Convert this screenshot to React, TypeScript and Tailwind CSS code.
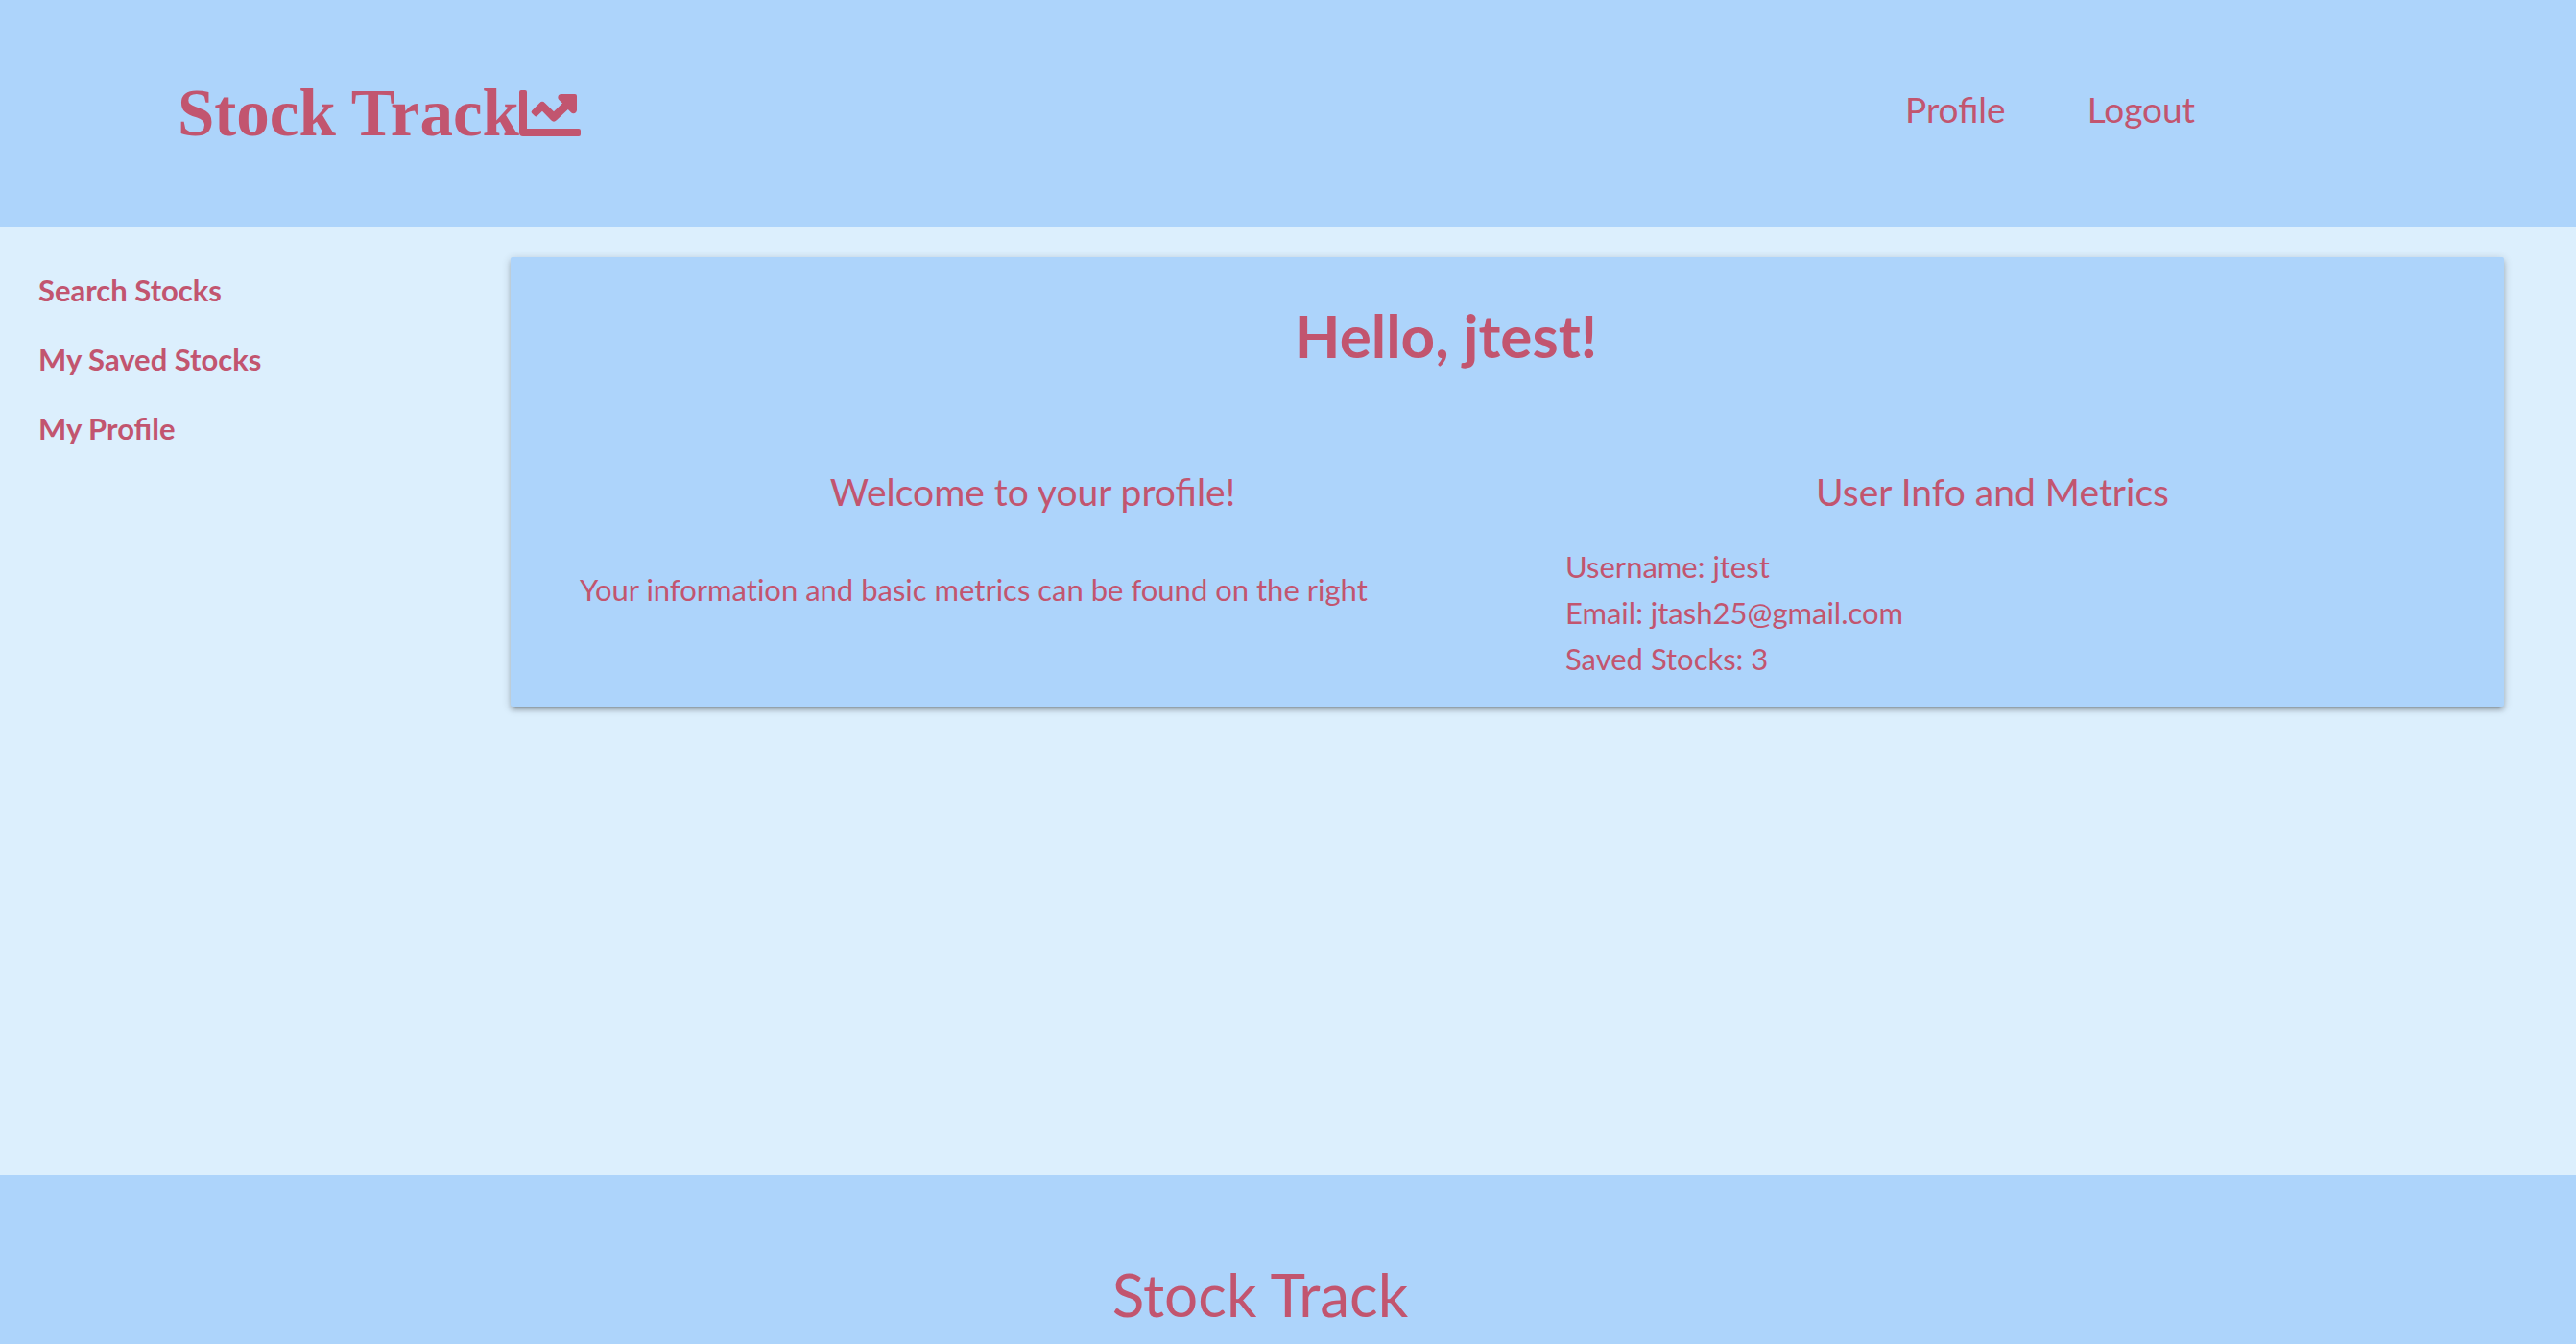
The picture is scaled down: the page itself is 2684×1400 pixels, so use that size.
const links = ["Search Stocks", "My Saved Stocks", "My Profile"];
const metrics = ["Username: jtest", "Email: jtash25@gmail.com", "Saved Stocks: 3"];

function ChartIcon() {
  return (
    <svg viewBox="0 0 64 48" className="mb-px h-12 w-16" fill="currentColor" aria-hidden="true">
      <path d="M2 0h4a2 2 0 0 1 2 2v38h54a2 2 0 0 1 2 2v4a2 2 0 0 1-2 2H4a4 4 0 0 1-4-4V2a2 2 0 0 1 2-2z" />
      <path d="M43.500 4H58a2 2 0 0 1 2 2v14.500c0 3.500-4 4.700-6 2.700l-3.200-3.200-12 11.300a4 4 0 0 1-5.600 0L24 21.700l-5.200 5.100a2 2 0 0 1-2.800 0l-2.800-2.800a2 2 0 0 1 0-2.800l8-8a4 4 0 0 1 5.600 0l9.200 9.100 9-8.800-3.600-3.600c-2-2-.900-5.900 2.100-5.900z" />
    </svg>
  );
}

export default function App() {
  return (
    <div className="flex min-h-screen flex-col bg-[#dceffd] font-[Lato,'Noto_Sans',sans-serif] text-[#c2556f]">
      <header className="flex h-[236px] items-center justify-between bg-[#add4fb] pr-[397px] pl-[185px]">
        <a href="#" className="flex items-center font-['Liberation_Serif',serif] text-[69px] leading-none font-bold">
          Stock Track
          <ChartIcon />
        </a>
        <nav className="flex gap-[85px] pb-2 text-[37px]">
          <a href="#">Profile</a>
          <a href="#">Logout</a>
        </nav>
      </header>
      <div className="flex flex-1 items-start pt-8 pr-[75px]">
        <nav className="flex w-[532px] shrink-0 flex-col gap-6 pt-[10px] pl-10 text-[31px] leading-12 font-bold">
          {links.map((l) => (
            <a key={l} href="#">{l}</a>
          ))}
        </nav>
        <main className="min-w-0 flex-1 rounded-xs bg-[#add4fb] pb-[26px] shadow-[0_4px_4px_rgba(0,0,0,0.14),0_6px_2px_-4px_rgba(0,0,0,0.12),0_2px_10px_rgba(0,0,0,0.2)]">
          <h1 className="pt-8 pr-[128px] text-center text-[62px] leading-[98px] font-bold">Hello, jtest!</h1>
          <div className="grid grid-cols-[944fr_890fr] gap-x-[83px] pt-[84px] pr-[88px] pl-[72px] text-[31px] leading-12">
            <section>
              <h2 className="text-center text-[39px] leading-[60px]">Welcome to your profile!</h2>
              <p className="pt-12 [font-variant-ligatures:none]">Your information and basic metrics can be found on the right</p>
            </section>
            <section>
              <h2 className="text-center text-[39px] leading-[60px]">User Info and Metrics</h2>
              <ul className="pt-6">
                {metrics.map((m) => (
                  <li key={m}>{m}</li>
                ))}
              </ul>
            </section>
          </div>
        </main>
      </div>
      <footer className="h-[176px] bg-[#add4fb] pt-[76px] pr-[58px] text-center text-[62px] leading-[96px]">Stock Track</footer>
    </div>
  );
}
